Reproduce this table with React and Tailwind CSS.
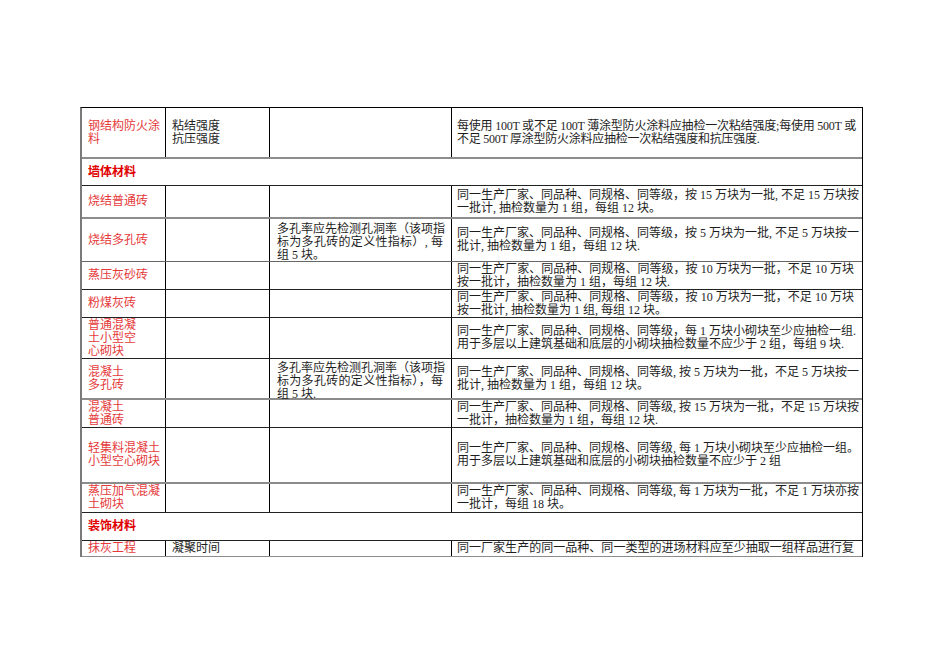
import React from 'react';

const red = 'text-[#e5393a]';

// each row: height class, bottom line class, cells
const rows = [
  {
    h: 'h-[51px]', line: 'border-b-2 border-[#8c8c8c]', tight: true,
    name: ['钢结构防火涂', '料'],
    item: ['粘结强度', '抗压强度'],
    note: [],
    rule: ['每使用 100T 或不足 100T 薄涂型防火涂料应抽检一次粘结强度;每使用 500T 或', '不足 500T 厚涂型防火涂料应抽检一次粘结强度和抗压强度.'],
  },
  { section: '墙体材料', h: 'h-[27px]', line: 'border-b border-[#222]' },
  {
    h: 'h-[33px]', line: 'border-b-2 border-[#8c8c8c]',
    name: ['烧结普通砖'], item: [], note: [],
    rule: ['同一生产厂家、同品种、同规格、同等级，按 15 万块为一批, 不足 15 万块按', '一批计, 抽检数量为 1 组，每组 12 块。'],
  },
  {
    h: 'h-[43px]', line: 'border-b border-[#666]',
    name: ['烧结多孔砖'], item: [],
    note: ['多孔率应先检测孔洞率（该项指', '标为多孔砖的定义性指标）, 每', '组 5 块。'],
    rule: ['同一生产厂家、同品种、同规格、同等级，按 5 万块为一批, 不足 5 万块按一', '批计, 抽检数量为 1 组，每组 12 块.'],
  },
  {
    h: 'h-[28px]', line: 'border-b border-[#222]',
    name: ['蒸压灰砂砖'], item: [], note: [],
    rule: ['同一生产厂家、同品种、同规格、同等级，按 10 万块为一批，不足 10 万块', '按一批计，抽检数量为 1 组，每组 12 块.'],
  },
  {
    h: 'h-[28px]', line: 'border-b border-[#222]',
    name: ['粉煤灰砖'], item: [], note: [],
    rule: ['同一生产厂家、同品种、同规格、同等级，按 10 万块为一批，不足 10 万块', '按一批计, 抽检数量为 1 组, 每组 12 块。'],
  },
  {
    h: 'h-[41px]', line: 'border-b border-[#222]',
    name: ['普通混凝', '土小型空', '心砌块'], item: [], note: [],
    rule: ['同一生产厂家、同品种、同规格、同等级，每 1 万块小砌块至少应抽检一组.', '用于多层以上建筑基础和底层的小砌块抽检数量不应少于 2 组，每组 9 块.'],
  },
  {
    h: 'h-[41px]', line: 'border-b-2 border-[#8c8c8c]',
    name: ['混凝土', '多孔砖'], item: [],
    note: ['多孔率应先检测孔洞率（该项指', '标为多孔砖的定义性指标），每', '组 5 块.'],
    rule: ['同一生产厂家、同品种、同规格、同等级, 按 5 万块为一批，不足 5 万块按一', '批计, 抽检数量为 1 组，每组 12 块。'],
  },
  {
    h: 'h-[28px]', line: 'border-b border-[#222]',
    name: ['混凝土', '普通砖'], item: [], note: [],
    rule: ['同一生产厂家、同品种、同规格、同等级, 按 15 万块为一批，不足 15 万块按', '一批计，抽检数量为 1 组，每组 12 块.'],
  },
  {
    h: 'h-[56px]', line: 'border-b-2 border-[#8c8c8c]',
    name: ['轻集料混凝土', '小型空心砌块'], item: [], note: [],
    rule: ['同一生产厂家、同品种、同规格、同等级, 每 1 万块小砌块至少应抽检一组。', '用于多层以上建筑基础和底层的小砌块抽检数量不应少于 2 组'],
  },
  {
    h: 'h-[29px]', line: 'border-b border-[#222]',
    name: ['蒸压加气混凝', '土砌块'], item: [], note: [],
    rule: ['同一生产厂家、同品种、同规格、同等级, 每 1 万块为一批，不足 1 万块亦按', '一批计，每组 18 块。'],
  },
  { section: '装饰材料', h: 'h-[28px]', line: 'border-b border-[#222]' },
  {
    h: 'h-[16px]', line: 'border-b border-[#8c8c8c]', last: true,
    name: ['抹灰工程'], item: ['凝聚时间'], note: [],
    rule: ['同一厂家生产的同一品种、同一类型的进场材料应至少抽取一组样品进行复'],
  },
];

function Lines({ lines, justify, lastJustify }) {
  return lines.map((t, i) => {
    const stretch = justify && (i < lines.length - 1 || lastJustify);
    return (
      <div key={i} className={stretch ? 'whitespace-nowrap text-justify [text-align-last:justify]' : 'whitespace-nowrap'}>
        {t}
      </div>
    );
  });
}

export default function App() {
  return (
    <div className="min-h-screen bg-white pt-[107px] pl-[80px] font-['Liberation_Serif','Noto_Sans_CJK_SC',serif] text-[12px] leading-[13px] text-[#1e1e1e]">
      <div className="w-[783px] border-t border-black border-l-2 border-l-[#7a7a7a] border-r border-r-black">
        {rows.map((r, i) =>
          r.section ? (
            <div key={i} className={`flex items-center px-[6px] font-bold text-[#e00000] ${r.h} ${r.line}`}>
              {r.section}
            </div>
          ) : (
            <div key={i} className={`flex ${r.h} ${r.line}`}>
              <div className={`w-[84px] shrink-0 border-r border-black px-[6px] flex flex-col justify-center ${red}`}>
                <Lines lines={r.name} />
              </div>
              <div className="w-[104px] shrink-0 border-r border-black px-[6px] flex flex-col justify-center">
                <Lines lines={r.item} />
              </div>
              <div className="w-[182px] shrink-0 border-r border-black pl-[7px] pr-[8px] pt-[5px] flex flex-col justify-center overflow-visible">
                <Lines lines={r.note} justify />
              </div>
              <div className={`flex-1 min-w-0 pl-[5px] flex flex-col justify-center overflow-hidden ${r.tight ? 'pr-[6px] tracking-[-0.25px]' : 'pr-[8px]'}`}>
                <Lines lines={r.rule} justify lastJustify={r.last} />
              </div>
            </div>
          )
        )}
      </div>
    </div>
  );
}
